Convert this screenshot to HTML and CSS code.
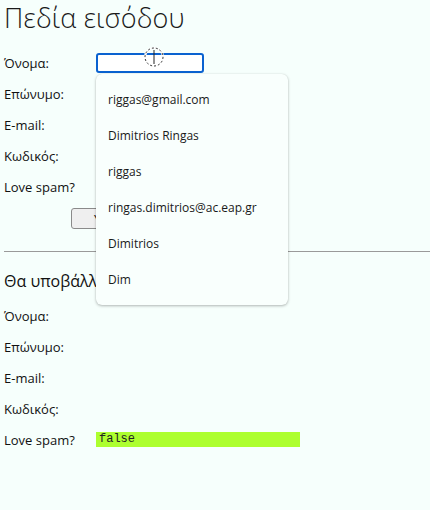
FILE: index.html
```html
<!DOCTYPE html>
<html lang="el">
<head>
<meta charset="utf-8">
<title>Πεδία εισόδου</title>
<link rel="stylesheet" href="styles.css">
</head>
<body>
<div class="page">
  <h1 class="title">Πεδία εισόδου</h1>
  <form class="form">
    <div class="row">
      <label class="label">Όνομα:</label>
      <input class="field field-focus" type="text">
    </div>
    <div class="row">
      <label class="label">Επώνυμο:</label>
      <input class="field" type="text">
    </div>
    <div class="row">
      <label class="label">E-mail:</label>
      <input class="field" type="text">
    </div>
    <div class="row">
      <label class="label">Κωδικός:</label>
      <input class="field" type="password">
    </div>
    <div class="row">
      <label class="label">Love spam?</label>
      <input class="check" type="checkbox">
    </div>
    <div class="actions">
      <button class="submit" type="button">Υποβολή</button>
    </div>

    <div class="autofill">
      <div class="autofill-item">riggas@gmail.com</div>
      <div class="autofill-item">Dimitrios Ringas</div>
      <div class="autofill-item">riggas</div>
      <div class="autofill-item">ringas.dimitrios@ac.eap.gr</div>
      <div class="autofill-item">Dimitrios</div>
      <div class="autofill-item">Dim</div>
    </div>

    <svg class="cursor" width="22" height="22" viewBox="0 0 22 22">
      <circle cx="11" cy="11" r="9" fill="none" stroke="#fff" stroke-width="2.2"/>
      <circle cx="11" cy="11" r="9" fill="none" stroke="#333" stroke-width="1" stroke-dasharray="2 2"/>
      <line x1="11" y1="4" x2="11" y2="18" stroke="#222" stroke-width="1"/>
    </svg>
  </form>

  <hr class="divider">

  <h2 class="subtitle">Θα υποβάλλονται:</h2>
  <div class="result">
    <div class="row">
      <span class="label">Όνομα:</span>
      <span class="value"></span>
    </div>
    <div class="row">
      <span class="label">Επώνυμο:</span>
      <span class="value"></span>
    </div>
    <div class="row">
      <span class="label">E-mail:</span>
      <span class="value"></span>
    </div>
    <div class="row">
      <span class="label">Κωδικός:</span>
      <span class="value"></span>
    </div>
    <div class="row">
      <span class="label">Love spam?</span>
      <span class="value bool">false</span>
    </div>
  </div>
</div>
</body>
</html>
```

FILE: styles.css
```css
html, body {
  margin: 0;
  padding: 0;
  background: #f6fffc;
}

body {
  font-family: "Open Sans", "Noto Sans", sans-serif;
  font-size: 13px;
  color: #111;
}

.page {
  padding: 0 0 0 4px;
}

.title {
  margin: 0;
  font-family: "Open Sans", sans-serif;
  font-weight: 300;
  font-size: 27px;
  line-height: 36px;
  color: #1a1a1a;
  letter-spacing: 0.2px;
}

.form {
  position: relative;
  margin-top: 11px;
}

.row {
  display: grid;
  grid-template-columns: 92px 1fr;
  align-items: center;
  height: 31px;
}

.label {
  font-size: 13px;
  line-height: 16px;
  color: #111;
}

.field {
  box-sizing: border-box;
  width: 108px;
  height: 20px;
  margin: 0;
  padding: 1px 4px;
  border: 1px solid #767676;
  border-radius: 2px;
  background: #fff;
  font: 13px "Open Sans", sans-serif;
}

.field-focus {
  border: 2px solid #0a62d0;
  border-radius: 3px;
  outline: none;
}

.check {
  margin: 0;
  width: 13px;
  height: 13px;
}

.actions {
  padding-top: 6px;
  padding-left: 67px;
}

.submit {
  box-sizing: border-box;
  height: 21px;
  padding: 0 22px;
  border: 1px solid #8a8a8a;
  border-radius: 3px;
  background: #efefef;
  font: 13px "Open Sans", sans-serif;
  color: #111;
}

.autofill {
  position: absolute;
  left: 92px;
  top: 27px;
  width: 192px;
  box-sizing: border-box;
  padding: 8px 0 7px;
  background: #f9fffd;
  border-radius: 6px;
  box-shadow: 0 1px 3px rgba(0, 0, 0, 0.28), 0 0 1px rgba(0, 0, 0, 0.12);
}

.autofill-item {
  height: 36px;
  line-height: 36px;
  padding-left: 12px;
  font-family: "Open Sans", sans-serif;
  font-size: 12px;
  color: #1a1a1a;
  white-space: nowrap;
}

.cursor {
  position: absolute;
  left: 139px;
  top: -1px;
}

.divider {
  margin: 22px 0 0 0;
  border: 0;
  border-top: 1px solid #9a9a9a;
  height: 0;
}

.subtitle {
  margin: 17px 0 0 0;
  font-family: "Open Sans", sans-serif;
  font-weight: 400;
  font-size: 16px;
  line-height: 24px;
  color: #111;
}

.result {
  margin-top: 7px;
}

.value {
  display: block;
  width: 204px;
}

.bool {
  height: 15px;
  line-height: 15px;
  background: #adff2f;
  font-family: "Liberation Mono", monospace;
  font-size: 12px;
  padding-left: 3px;
  box-sizing: border-box;
  color: #222;
}
```
